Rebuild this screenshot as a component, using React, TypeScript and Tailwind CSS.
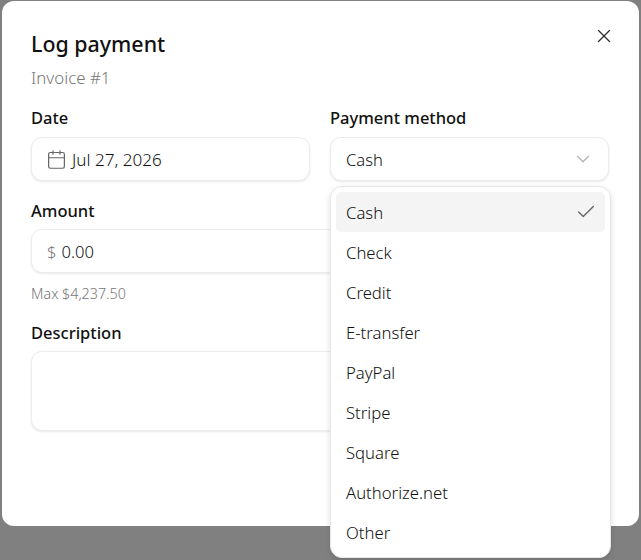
import { Calendar, Check, ChevronDown, X } from 'lucide-react'

const methods = ['Cash', 'Check', 'Credit', 'E-transfer', 'PayPal', 'Stripe', 'Square', 'Authorize.net', 'Other']

const fieldClass =
  'flex items-center rounded-[11px] border border-[#ececec] bg-white shadow-[0_1px_2px_rgba(0,0,0,0.09)]'

function Label({ children }: { children: string }) {
  return <div className="h-[19px] text-[16.5px] leading-[17px] font-medium text-[#111]">{children}</div>
}

export default function App() {
  return (
    <div className="relative h-[560px] w-[641px] overflow-hidden bg-[#808080] pt-px pl-[2px] font-['Noto_Sans',sans-serif]">
      {/* Dialog */}
      <div className="relative h-[525px] w-[637px] rounded-xl bg-white px-[29px] pt-[30px]">
        <h2 className="h-[27px] text-[21.4px] leading-[25px] font-medium text-[#111]">Log payment</h2>
        <p className="mt-[9px] h-[22px] text-[16.9px] leading-[22px] font-light text-[#777]">Invoice #1</p>

        <div className="mt-[20px] grid grid-cols-[279px_279px] gap-x-5">
          <div>
            <Label>Date</Label>
            <div className={`${fieldClass} mt-[9px] h-[44px] pl-[14px] text-[17.1px] font-light text-[#111]`}>
              <Calendar className="h-[21px] w-[21px] text-[#666]" strokeWidth={1.4} />
              <span className="ml-[5px] pt-[2px]">Jul 27, 2026</span>
            </div>
          </div>
          <div>
            <Label>Payment method</Label>
            <div className={`${fieldClass} mt-[9px] h-[44px] justify-between pr-[14px] pl-[15px] text-[16.6px] font-light text-[#111]`}>
              <span className="pt-[2px]">Cash</span>
              <ChevronDown className="h-[22px] w-[22px] text-[#b5b5b5]" strokeWidth={1.5} />
            </div>
          </div>
        </div>

        <div className="mt-[21px]">
          <Label>Amount</Label>
          <div className={`${fieldClass} mt-[8px] h-[44px] pl-[15px] text-[16.6px] font-light text-[#111]`}>
            <span className="pt-[2px] text-[#777]">$</span>
            <span className="ml-[5px] pt-[2px]">0.00</span>
          </div>
          <p className="mt-[12px] h-[18px] text-[14.3px] leading-[18px] font-light text-[#777]">Max $4,237.50</p>
        </div>

        <div className="mt-[21px]">
          <Label>Description</Label>
          <div className={`${fieldClass} mt-[8px] h-[80px]`} />
        </div>

        <button className="absolute top-[24px] right-[24px] text-[#333]">
          <X className="h-[22px] w-[22px]" strokeWidth={1.5} />
        </button>
      </div>

      {/* Select dropdown */}
      <ul className="absolute top-[186px] left-[330px] w-[281px] rounded-xl border border-[#e6e6e6] bg-white p-[5px] shadow-[0_2px_6px_rgba(0,0,0,0.12)]">
        {methods.map((m) => (
          <li
            key={m}
            className={`flex h-10 items-center justify-between rounded-[5px] pr-[8px] pl-[10px] text-[16.7px] font-light text-[#111] ${m === 'Cash' ? 'bg-[#f4f4f4]' : ''}`}
          >
            <span className="pt-[2px]">{m}</span>
            {m === 'Cash' && <Check className="h-[22px] w-[22px] text-[#666]" strokeWidth={1.5} />}
          </li>
        ))}
      </ul>
    </div>
  )
}
